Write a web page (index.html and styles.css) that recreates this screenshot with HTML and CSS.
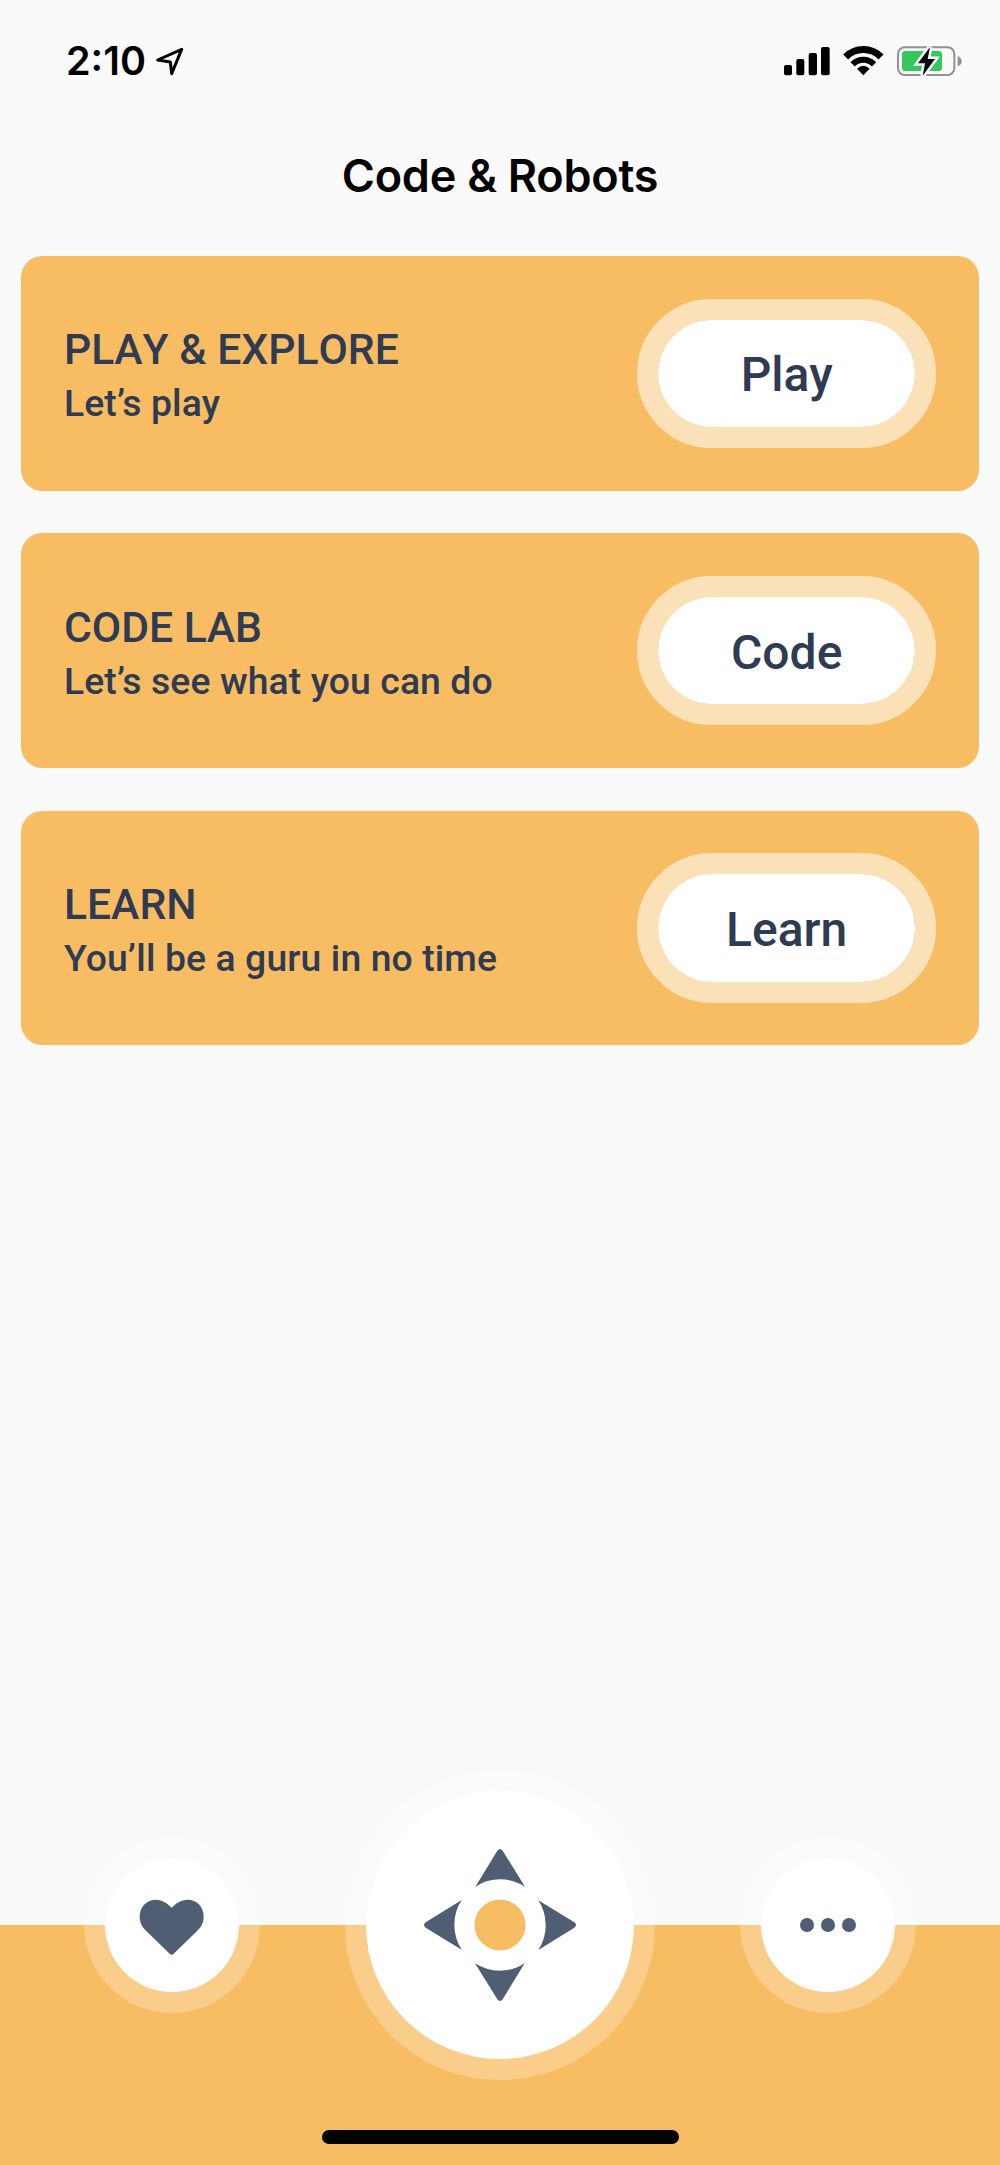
FILE: index.html
```
<!DOCTYPE html>
<html lang="en">
<head>
  <meta charset="UTF-8" />
  <title>Code &amp; Robots</title>
  <link rel="stylesheet" href="styles.css">
</head>
<body>
  <div class="app">

    <!-- Status bar -->
    <div class="status-bar">
      <div class="clock">
        <span class="time">2:10</span>
        <svg class="location" viewBox="316 46 90 90" aria-hidden="true">
          <path d="M324 88 L396 56 L366 129 L362 94 Z" fill="none" stroke="#000" stroke-width="9" stroke-linejoin="round"/>
        </svg>
      </div>
      <div class="status-icons">
        <svg class="signal" viewBox="36 0 150 180" aria-hidden="true">
          <rect x="42" y="105" width="24" height="31" rx="6"/>
          <rect x="79" y="87" width="24" height="49" rx="6"/>
          <rect x="116" y="69" width="25" height="67" rx="6"/>
          <rect x="153" y="51" width="26" height="85" rx="6"/>
        </svg>
        <svg class="wifi" viewBox="213 0 132 180" aria-hidden="true">
          <g fill="none" stroke="#000">
            <path d="M227 81 A74 74 0 0 1 333 81" stroke-width="21"/>
            <path d="M248 103 A44 44 0 0 1 312 103" stroke-width="18"/>
          </g>
          <path d="M261 116 Q280 99 299 116 L280 136 Z"/>
        </svg>
        <svg class="battery" viewBox="376 0 206 180" aria-hidden="true">
          <rect x="385" y="52" width="169" height="83" rx="20" fill="none" stroke="#929292" stroke-width="6"/>
          <path d="M564 78 Q576 83 576 94 Q576 105 564 109 Z" fill="#929292"/>
          <rect x="397" y="63" width="120" height="60" rx="10" fill="#34c759"/>
          <path d="M481 51 L445 100 H466 L459 137 L496 87 H474 Z" stroke="#fafafa" stroke-width="15" paint-order="stroke"/>
        </svg>
      </div>
    </div>

    <h1 class="title">Code &amp; Robots</h1>

    <!-- Cards -->
    <main class="cards">
      <section class="card">
        <div class="card-text">
          <h2>PLAY &amp; EXPLORE</h2>
          <p>Let’s play</p>
        </div>
        <button class="card-button">Play</button>
      </section>
      <section class="card">
        <div class="card-text">
          <h2>CODE LAB</h2>
          <p>Let’s see what you can do</p>
        </div>
        <button class="card-button">Code</button>
      </section>
      <section class="card">
        <div class="card-text">
          <h2>LEARN</h2>
          <p>You’ll be a guru in no time</p>
        </div>
        <button class="card-button">Learn</button>
      </section>
    </main>

    <!-- Bottom navigation -->
    <nav class="bottom-nav">
      <div class="nav-buttons">
        <button class="nav-button" aria-label="Favorites">
          <svg class="heart" viewBox="237 215 201 200">
            <path d="M335 262 C348 249 363 238 382 238 C411 238 431 260 431 289 C431 307 423 321 409 334 L341 400 Q335 406 329 400 L261 334 C247 321 239 307 239 289 C239 260 260 238 289 238 C307 238 322 249 335 262 Z"/>
          </svg>
        </button>
        <button class="nav-button large" aria-label="Drive">
          <svg class="compass" viewBox="307 291 468 468">
            <path d="M467 410 L533 302 Q541 292 549 302 L616 410 A137 137 0 0 0 467 410 Z"/>
            <path d="M467 410 L533 302 Q541 292 549 302 L616 410 A137 137 0 0 0 467 410 Z" transform="rotate(90 541 525)"/>
            <path d="M467 410 L533 302 Q541 292 549 302 L616 410 A137 137 0 0 0 467 410 Z" transform="rotate(180 541 525)"/>
            <path d="M467 410 L533 302 Q541 292 549 302 L616 410 A137 137 0 0 0 467 410 Z" transform="rotate(270 541 525)"/>
            <circle class="hub" cx="541" cy="525" r="76.5"/>
          </svg>
        </button>
        <button class="nav-button" aria-label="More">
          <span class="dot"></span>
          <span class="dot"></span>
          <span class="dot"></span>
        </button>
      </div>
      <div class="home-indicator"></div>
    </nav>

  </div>
</body>
</html>
```

FILE: styles.css
```
/* Reset */
* {
  margin: 0; padding: 0; box-sizing: border-box;
}
body {
  background: #fafafa;
  font-family: Roboto, sans-serif;
  color: #2e3b52;
}
button {
  font-family: inherit;
  color: inherit;
}
svg {
  display: block;
  flex: none;
}

.app {
  width: 1000px;
  height: 2165px;
  display: flex;
  flex-direction: column;
  overflow: hidden;
}

/* Status bar */
.status-bar {
  display: flex;
  justify-content: space-between;
  height: 90px;
  padding: 30px 36px 0 66px;
  color: #000;
}
.clock {
  display: flex;
  align-items: center;
  height: 60px;
}
.time {
  width: 89px;
  padding-top: 2px;
  font-family: Inter, sans-serif;
  font-size: 39.5px;
  font-weight: 600;
  line-height: 60px;
  white-space: nowrap;
}
.location {
  width: 30px;
  height: 30px;
  margin-top: 2px;
}
.status-icons {
  display: flex;
}
.status-icons svg {
  height: 60px;
}
.signal { width: 50px; margin-right: 9px; }
.wifi { width: 44px; margin-right: 10.3px; }
.battery { width: 68.7px; }

.title {
  height: 166px;
  padding-top: 56px;
  color: #000;
  font-family: Inter, sans-serif;
  font-size: 45px;
  font-weight: 600;
  letter-spacing: -0.25px;
  line-height: 60px;
  text-align: center;
}

/* Cards */
.cards {
  flex: 1;
  display: flex;
  flex-direction: column;
  gap: 42.67px;
  padding: 0 21.33px;
}
.card {
  display: flex;
  align-items: center;
  justify-content: space-between;
  height: 234.67px;
  padding: 0 42.67px;
  background: #f8bd63;
  border-radius: 21.33px;
}
.card-text {
  padding-top: 4px;
}
.card h2 {
  font-size: 42.67px;
  font-weight: 500;
  font-kerning: none;
  line-height: 56px;
}
.card p {
  font-size: 37.33px;
  font-weight: 500;
  letter-spacing: 0.1px;
  line-height: 52px;
}
.card-button {
  width: 298.67px;
  height: 149.33px;
  padding-top: 3px;
  background: #fff;
  background-clip: padding-box;
  border: 21.33px solid #fae1b8;
  border-radius: 75px;
  font-size: 48px;
  font-weight: 500;
}

/* Bottom navigation */
.bottom-nav {
  display: flex;
  flex-direction: column;
  align-items: center;
  justify-content: space-between;
  height: 240px;
  padding-bottom: 21.3px;
  background: #f8bd63;
}
.nav-buttons {
  display: flex;
  align-items: center;
  justify-content: space-between;
  width: 100%;
  height: 309.33px;
  margin-top: -154.67px;
  padding: 0 84px;
}
.nav-button {
  display: flex;
  align-items: center;
  justify-content: center;
  gap: 7.3px;
  width: 176px;
  height: 176px;
  background: #fff;
  background-clip: padding-box;
  border: 21.33px solid rgba(255, 255, 255, 0.25);
  border-radius: 50%;
}
.nav-button.large {
  width: 309.33px;
  height: 309.33px;
}
.nav-button svg {
  fill: #4f5e73;
}
.heart {
  width: 67px;
  height: 66.7px;
}
.compass {
  width: 156px;
  height: 156px;
}
.nav-button .hub {
  fill: #f8bd63;
}
.dot {
  width: 14px;
  height: 14px;
  background: #4f5e73;
  border-radius: 50%;
}
.home-indicator {
  width: 357px;
  height: 13.3px;
  background: #000;
  border-radius: 7px;
}
```
